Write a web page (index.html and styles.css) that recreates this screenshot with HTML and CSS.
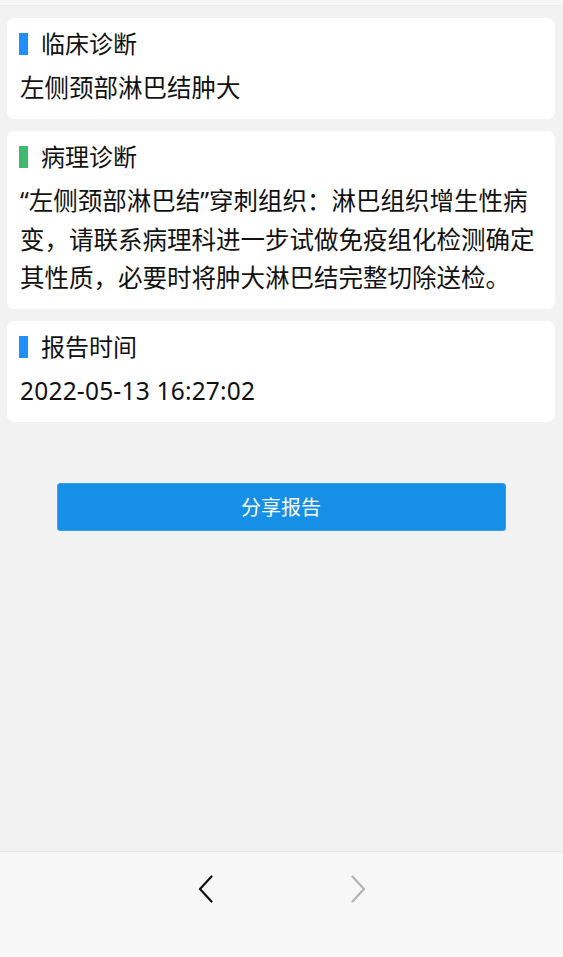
FILE: index.html
```html
<!DOCTYPE html>
<html lang="zh-CN">
<head>
<meta charset="utf-8">
<title>报告</title>
<link rel="stylesheet" href="styles.css">
</head>
<body>
<div class="page">
  <div class="topline"></div>
  <main class="content">
    <section class="card">
      <h2 class="card-title"><span class="mark mark-blue"></span>临床诊断</h2>
      <p class="card-body">左侧颈部淋巴结肿大</p>
    </section>
    <section class="card">
      <h2 class="card-title"><span class="mark mark-green"></span>病理诊断</h2>
      <p class="card-body">“左侧颈部淋巴结”穿刺组织：淋巴组织增生性病变，请联系病理科进一步试做免疫组化检测确定其性质，必要时将肿大淋巴结完整切除送检。</p>
    </section>
    <section class="card">
      <h2 class="card-title"><span class="mark mark-blue"></span>报告时间</h2>
      <p class="card-body card-date">2022-05-13 16:27:02</p>
    </section>
    <div class="actions">
      <button class="share-btn" type="button">分享报告</button>
    </div>
  </main>
  <nav class="toolbar">
    <button class="nav-btn" type="button" aria-label="后退">
      <svg width="16" height="28" viewBox="0 0 16 28"><path d="M13.5 1.5 L2 14 L13.5 26.5" fill="none" stroke="#111" stroke-width="2.2" stroke-linecap="round" stroke-linejoin="round"/></svg>
    </button>
    <button class="nav-btn" type="button" aria-label="前进">
      <svg width="16" height="28" viewBox="0 0 16 28"><path d="M2.5 1.5 L14 14 L2.5 26.5" fill="none" stroke="#b3b3b3" stroke-width="2.2" stroke-linecap="round" stroke-linejoin="round"/></svg>
    </button>
  </nav>
</div>
</body>
</html>
```
FILE: styles.css
```css
* { box-sizing: border-box; }
html, body { margin: 0; padding: 0; }
body {
  background: #f2f2f2;
  font-family: "Noto Sans", "Noto Sans CJK SC", sans-serif;
  color: #111;
}
.page {
  display: flex;
  flex-direction: column;
  height: 957px;
}
.topline {
  height: 6px;
  background: #f7f7f7;
  border-bottom: 1px solid #ececec;
}
.content {
  flex: 1;
  padding: 12px 8px 0 7px;
  display: flex;
  flex-direction: column;
  gap: 12px;
}
.card {
  background: #fff;
  border-radius: 7px;
  padding: 6px 12px 11.5px 12px;
}
.card-title {
  margin: 0;
  display: flex;
  align-items: center;
  font-size: 24px;
  font-weight: 400;
  line-height: 40px;
  height: 40px;
}
.mark {
  display: inline-block;
  width: 9px;
  height: 22px;
  margin-right: 13px;
}
.mark-blue { background: #1e8ffb; }
.mark-green { background: #3dba6f; }
.card-body {
  margin: 5px 0 0 1px;
  font-size: 24.5px;
  line-height: 38.5px;
}
.card-date { letter-spacing: 0.2px; }
.actions {
  display: flex;
  justify-content: center;
  padding-top: 48.5px;
}
.share-btn {
  width: 449px;
  height: 48px;
  background: #168fe6;
  border: 1px solid #3a9ff0;
  border-radius: 3px;
  color: #fff;
  font-family: "Noto Sans CJK SC", sans-serif;
  font-size: 20px;
  padding: 0;
}
.toolbar {
  height: 106px;
  background: #f7f7f7;
  border-top: 1px solid #e6e6e6;
  display: flex;
  justify-content: center;
  gap: 136px;
  padding-top: 23px;
}
.nav-btn {
  background: none;
  border: 0;
  padding: 0;
  width: 16px;
  height: 28px;
}
.nav-btn svg { display: block; }
```
